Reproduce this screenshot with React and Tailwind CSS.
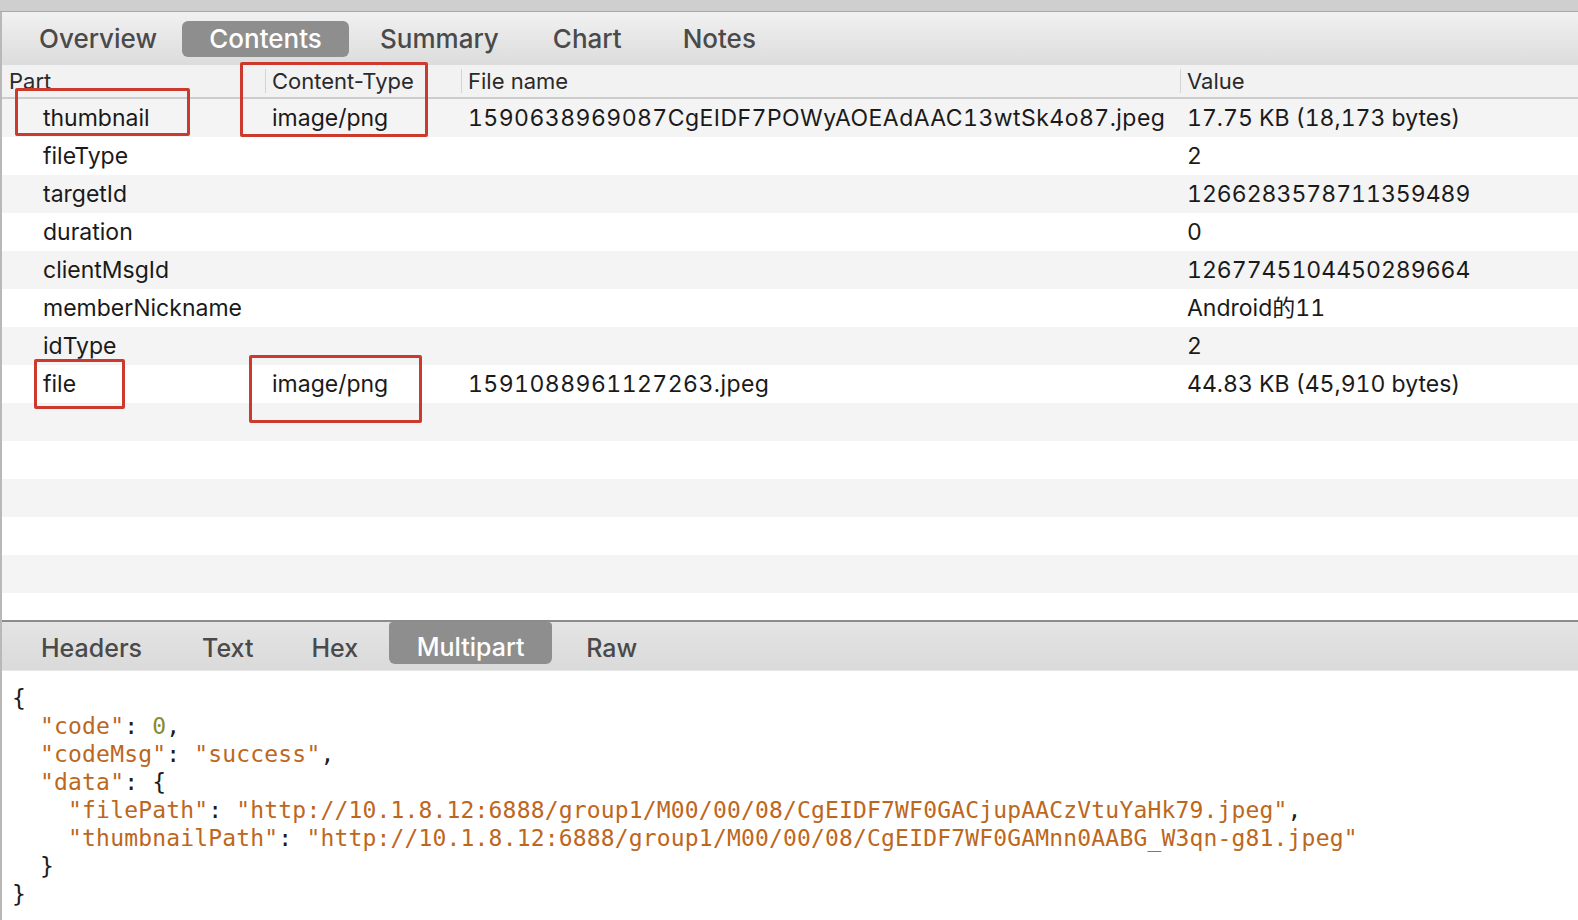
import React from "react";

const rows = [
  { part: "thumbnail", type: "image/png", name: "1590638969087CgEIDF7POWyAOEAdAAC13wtSk4o87.jpeg", value: "17.75 KB (18,173 bytes)" },
  { part: "fileType", value: "2" },
  { part: "targetId", value: "1266283578711359489" },
  { part: "duration", value: "0" },
  { part: "clientMsgId", value: "1267745104450289664" },
  { part: "memberNickname", value: "Android的11" },
  { part: "idType", value: "2" },
  { part: "file", type: "image/png", name: "1591088961127263.jpeg", value: "44.83 KB (45,910 bytes)" },
  {}, {}, {}, {}, {}, {}, {},
];

const ui = { fontFamily: 'Inter, "Noto Sans CJK SC", sans-serif' };
const mono = { fontFamily: '"DejaVu Sans Mono", "Liberation Mono", monospace' };

const Str = ({ children }) => <span className="text-[#bd671d]">{children}</span>;
const P = ({ children }) => <span className="text-[#1c1c1c]">{children}</span>;

const App = () => {
  return (
    <div className="relative w-[1578px] h-[920px] overflow-hidden bg-white" style={ui}>
      {/* window top strip */}
      <div className="h-[12px] bg-[#cfcfcf] border-b border-[#a9a9a9]" />

      <div className="flex flex-col h-[908px] border-l-2 border-[#b8b8b8]">
        {/* top tabs */}
        <div className="h-[53px] shrink-0 flex items-center bg-gradient-to-b from-[#f1f1f1] to-[#dcdcdc] text-[26px] font-medium text-[#4a4a4a]">
          <span className="ml-[37px]">Overview</span>
          <span className="ml-[25px] w-[167px] h-[36px] flex items-center justify-center rounded-md bg-[#8e8e8e] text-white">Contents</span>
          <span className="ml-[31px]">Summary</span>
          <span className="ml-[54px]">Chart</span>
          <span className="ml-[61px]">Notes</span>
        </div>

        {/* table header */}
        <div className="h-[34px] shrink-0 flex items-center bg-[#f2f2f2] border-b-2 border-[#cdcdcd] text-[22px] text-[#2a2a2a]">
          <div className="w-[263px] pl-[7px]">Part</div>
          <div className="w-[196px] flex items-center">
            <div className="w-px h-[24px] bg-[#d4d4d4]" />
            <span className="ml-[6px]">Content-Type</span>
          </div>
          <div className="w-[719px] flex items-center">
            <div className="w-px h-[24px] bg-[#d4d4d4]" />
            <span className="ml-[6px]">File name</span>
          </div>
          <div className="flex-1 flex items-center">
            <div className="w-px h-[24px] bg-[#d4d4d4]" />
            <span className="ml-[6px]">Value</span>
          </div>
        </div>

        {/* table rows */}
        <div className="h-[521px] shrink-0 overflow-hidden text-[23px] text-[#1a1a1a] tabular-nums">
          {rows.map((r, i) => (
            <div key={i} className={`h-[38px] flex items-center whitespace-nowrap ${i % 2 === 0 ? "bg-[#f4f4f4]" : "bg-white"}`}>
              <div className="w-[263px] pl-[41px]">{r.part}</div>
              <div className="w-[196px] pl-[7px]">{r.type}</div>
              <div className="w-[719px] pl-[7px] tracking-[0.45px]">{r.name}</div>
              <div className="flex-1 pl-[7px]">{r.value}</div>
            </div>
          ))}
        </div>

        {/* bottom tabs */}
        <div className="h-[51px] shrink-0 flex items-start bg-gradient-to-b from-[#e4e4e4] to-[#dadada] border-t-2 border-[#8c8c8c] border-b border-b-[#e8e8e8] text-[25px] font-medium text-[#4a4a4a]">
          <span className="ml-[39px] mt-[8px]">Headers</span>
          <span className="ml-[60px] mt-[8px]">Text</span>
          <span className="ml-[58px] mt-[8px]">Hex</span>
          <span className="ml-[31px] w-[163px] h-[42px] pt-[9px] flex items-center justify-center rounded-b-md rounded-t-sm bg-[#8e8e8e] text-white">Multipart</span>
          <span className="ml-[34px] mt-[8px]">Raw</span>
        </div>

        {/* body */}
        <pre className="flex-1 pt-[13px] pl-[10px] text-[23px] leading-[28px] tracking-[0.17px] text-[#1c1c1c]" style={mono}>
          <P>{"{"}</P>{"\n"}
          {"  "}<Str>"code"</Str><P>: </P><span className="text-[#8a8a2c]">0</span><P>,</P>{"\n"}
          {"  "}<Str>"codeMsg"</Str><P>: </P><Str>"success"</Str><P>,</P>{"\n"}
          {"  "}<Str>"data"</Str><P>: {"{"}</P>{"\n"}
          {"    "}<Str>"filePath"</Str><P>: </P><Str>"http://10.1.8.12:6888/group1/M00/00/08/CgEIDF7WF0GACjupAACzVtuYaHk79.jpeg"</Str><P>,</P>{"\n"}
          {"    "}<Str>"thumbnailPath"</Str><P>: </P><Str>"http://10.1.8.12:6888/group1/M00/00/08/CgEIDF7WF0GAMnn0AABG_W3qn-g81.jpeg"</Str>{"\n"}
          {"  "}<P>{"}"}</P>{"\n"}
          <P>{"}"}</P>
        </pre>
      </div>

      {/* red annotation boxes */}
      <div className="absolute left-[15px] top-[88px] w-[175px] h-[48px] border-[3px] border-[#cc3a2e] rounded-[2px]" />
      <div className="absolute left-[240px] top-[62px] w-[188px] h-[75px] border-[3px] border-[#cc3a2e] rounded-[2px]" />
      <div className="absolute left-[34px] top-[359px] w-[91px] h-[50px] border-[3px] border-[#cc3a2e] rounded-[2px]" />
      <div className="absolute left-[249px] top-[355px] w-[173px] h-[68px] border-[3px] border-[#cc3a2e] rounded-[2px]" />
    </div>
  );
};

export default App;
